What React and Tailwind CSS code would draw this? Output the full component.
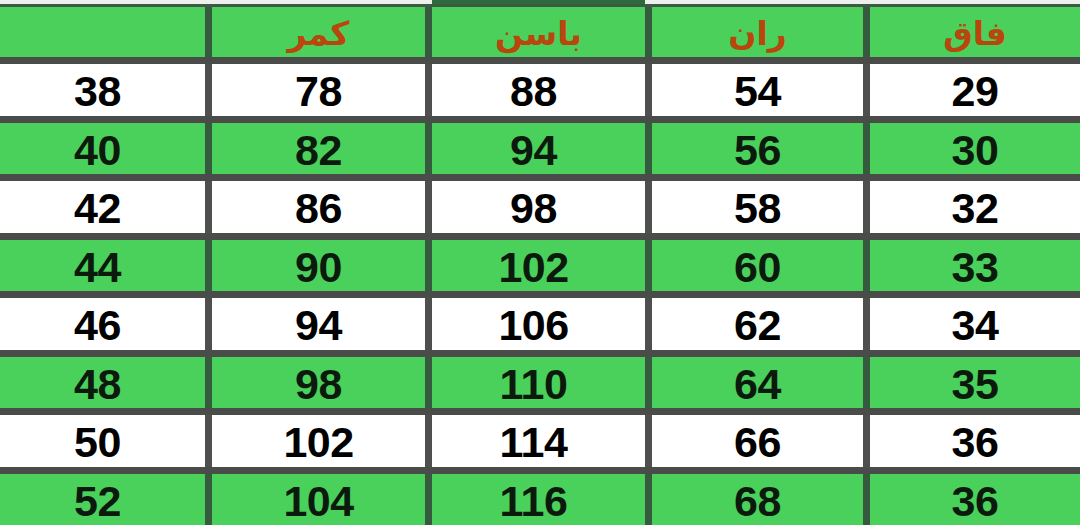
const headers = ["", "كمر", "باسن", "ران", "فاق"];

const rows = [
  ["38", "78", "88", "54", "29"],
  ["40", "82", "94", "56", "30"],
  ["42", "86", "98", "58", "32"],
  ["44", "90", "102", "60", "33"],
  ["46", "94", "106", "62", "34"],
  ["48", "98", "110", "64", "35"],
  ["50", "102", "114", "66", "36"],
  ["52", "104", "116", "68", "36"],
];

const widths = ["w-[205px]", "w-[220px]", "w-[220px]", "w-[218px]", "flex-1"];
const pads = ["pr-[10px]", "", "pr-[10px]", "", ""];

const Cell = ({ i, green, children }) => (
  <div
    className={`${widths[i]} ${i > 0 ? "border-l-[7px]" : ""} ${
      green ? "border-[#365a3e]" : "border-[#4f4f4f]"
    } flex items-center justify-center h-full`}
  >
    {children}
  </div>
);

export default function App() {
  return (
    <div className="w-[1080px] h-[530px] overflow-hidden bg-white flex flex-col font-['Liberation_Sans',Arial,sans-serif]">
      {/* top strip */}
      <div className="flex h-[4px] bg-[#eef0ee]">
        <div className="w-[432px]" />
        <div className="w-[213px] bg-[#2d6a3f]" />
      </div>
      <div className="h-[3px] bg-[#3d5a45]" />
      {/* header */}
      <div className="flex h-[50px] bg-[#4bd05b]">
        {headers.map((h, i) => (
          <Cell key={i} i={i} green>
            <span
              dir="rtl"
              className="text-[33px] font-bold text-[#b9460c] leading-none pt-[2px] font-['DejaVu_Sans',sans-serif]"
            >
              {h}
            </span>
          </Cell>
        ))}
      </div>
      {rows.map((r, ri) => {
        const green = ri % 2 === 1;
        return (
          <div
            key={ri}
            className={`flex h-[58.5px] shrink-0 border-t-[7px] border-[#4a4c4a] ${
              green ? "bg-[#4ad15b]" : "bg-white"
            }`}
          >
            {r.map((v, ci) => (
              <Cell key={ci} i={ci} green={green}>
                <span
                  className={`text-[43px] font-bold leading-none pt-[4px] tracking-[-0.5px] ${pads[ci]} ${
                    green ? "text-[#0c1a0e]" : "text-black"
                  }`}
                >
                  {v}
                </span>
              </Cell>
            ))}
          </div>
        );
      })}
    </div>
  );
}
